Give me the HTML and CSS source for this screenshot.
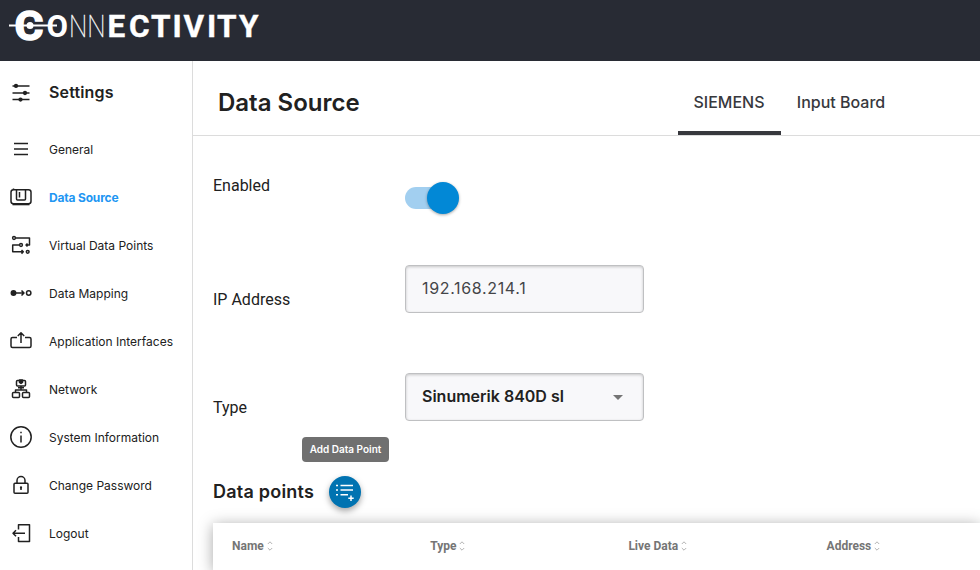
FILE: index.html
```html
<!DOCTYPE html>
<html lang="en">
<head>
<meta charset="utf-8">
<title>Connectivity</title>
<link rel="stylesheet" href="styles.css">
</head>
<body>
<header class="topbar">
  <svg class="logo" width="274" height="61" viewBox="0 0 274 61">
    <g fill="#fff" font-family="Roboto, sans-serif">
      <text x="14.500" y="40" font-size="41" font-weight="700" stroke="#fff" stroke-width="1.400" textLength="29" lengthAdjust="spacingAndGlyphs">C</text>
      <text x="46.500" y="37" font-size="31.500" font-weight="700" textLength="21.500" lengthAdjust="spacingAndGlyphs">O</text>
      <text x="69" y="37" font-size="31.500" font-weight="100" stroke="#fff" stroke-width=".3" textLength="36.500" lengthAdjust="spacingAndGlyphs">NN</text>
      <text x="107.500 129 151 172.500 183.500 207 217 239" y="37" font-size="31.500" font-weight="700" stroke="#fff" stroke-width=".4">ECTIVITY</text>
      <path d="M9 24.500H57v2H9z"/>
      <circle cx="30" cy="25.500" r="3.500"/>
    </g>
  </svg>
</header>
<div class="shell">
  <nav class="sidebar">
    <div class="side-title">
      <svg class="icon" viewBox="0 0 24 24"><path d="M3.500 4.900h17M3.500 12h17M3.500 18.600h17"/><g class="solid"><circle cx="7" cy="4.900" r="1.400"/><circle cx="16" cy="12" r="1.400"/><circle cx="11.500" cy="18.600" r="1.400"/></g></svg>
      <span>Settings</span>
    </div>
    <a class="item"><svg class="icon" viewBox="0 0 24 24"><path d="M5 6.600h14M5 12h14M5 17.400h14"/></svg><span>General</span></a>
    <a class="item active"><svg class="icon" viewBox="0 0 24 24"><rect x="2" y="4.800" width="20" height="14" rx="2.500"/><path d="M3.500 19.300h17" stroke-width="2"/><path d="M7.500 4.800v9.200q0 1 1 1h7q1 0 1-1V4.800M10.500 7v5.500M4.500 3.500v1.500"/></svg><span>Data Source</span></a>
    <a class="item"><svg class="icon" viewBox="0 0 24 24"><circle cx="5" cy="5" r="1.400"/><circle cx="12" cy="12" r="1.400"/><circle cx="18.700" cy="18.800" r="1.400"/><path d="M6.500 5H20.500v7H17M18.500 10.500L17 12l1.500 1.500M10.500 12H3.700v6.800H14M12.500 17l1.800 1.800-1.800 1.800"/></svg><span>Virtual Data Points</span></a>
    <a class="item"><svg class="icon" viewBox="0 0 24 24"><circle class="solid" cx="4.500" cy="12" r="2.200"/><path d="M6 12h9M12.500 9.500L15 12l-2.500 2.500"/><circle cx="19.700" cy="12" r="2.200"/></svg><span>Data Mapping</span></a>
    <a class="item"><svg class="icon" viewBox="0 0 24 24"><path d="M8 8.500H3.500q-1.500 0-1.500 1.500v7q0 1.500 1.500 1.500h17q1.500 0 1.500-1.500v-7q0-1.500-1.500-1.500H16M12 14V3.800M8.800 7L12 3.800 15.200 7"/></svg><span>Application Interfaces</span></a>
    <a class="item"><svg class="icon" viewBox="0 0 24 24"><rect x="7.500" y="3.500" width="9" height="5.500" rx="1"/><path class="solid" d="M10.500 3h3v2.500l-1.500 1-1.500-1z"/><path d="M12 9v4M9 10.800h6M6.500 15.500V13h11v2.500"/><rect x="3.500" y="15.500" width="7" height="5" rx="1"/><rect x="13.500" y="15.500" width="7" height="5" rx="1"/></svg><span>Network</span></a>
    <a class="item"><svg class="icon" viewBox="0 0 24 24"><circle cx="12" cy="12" r="10.200"/><path d="M12 10.500v7M12 6.800v1.500"/></svg><span>System Information</span></a>
    <a class="item"><svg class="icon" viewBox="0 0 24 24"><rect x="5" y="10.300" width="14" height="10" rx="1"/><path d="M8 10.300V7.500a4 4 0 0 1 8 0v2.800M12 14v3"/><circle class="solid" cx="12" cy="14.500" r=".4"/></svg><span>Change Password</span></a>
    <a class="item"><svg class="icon" viewBox="0 0 24 24"><path d="M9.500 8.500V3.800H20.500v16.600H9.500V16M16 12.200H4M7 9.200l-3 3 3 3"/></svg><span>Logout</span></a>
  </nav>
  <main class="main">
    <div class="page-head">
      <h1>Data Source</h1>
      <div class="tabs"><a class="tab selected">SIEMENS</a><a class="tab">Input Board</a></div>
    </div>
    <div class="content">
      <div class="row enabled"><label>Enabled</label><div class="switch"><div class="thumb"></div></div></div>
      <div class="row"><label>IP Address</label><div class="field ip">192.168.214.1</div></div>
      <div class="row"><label>Type</label><div class="field select"><span>Sinumerik 840D sl</span><i class="caret"></i></div></div>
      <div class="points">
        <h2>Data points</h2>
        <div class="add">
          <svg width="32" height="32" viewBox="0 0 32 32"><path d="M11.500 9.500H24M11.500 14H24M11.500 18.700H19M7 9.500h2M7 14h2M7 18.700h2M22 19.500v5.500M19.300 22.200h5.400"/></svg>
          <span class="tooltip">Add Data Point</span>
        </div>
      </div>
      <div class="table">
        <div class="th">Name <svg class="sort" viewBox="0 0 6 10"><path d="M.8 3L3 .8 5.200 3M.8 7L3 9.200 5.200 7"/></svg></div>
        <div class="th">Type <svg class="sort" viewBox="0 0 6 10"><path d="M.8 3L3 .8 5.200 3M.8 7L3 9.200 5.200 7"/></svg></div>
        <div class="th">Live Data <svg class="sort" viewBox="0 0 6 10"><path d="M.8 3L3 .8 5.200 3M.8 7L3 9.200 5.200 7"/></svg></div>
        <div class="th">Address <svg class="sort" viewBox="0 0 6 10"><path d="M.8 3L3 .8 5.200 3M.8 7L3 9.200 5.200 7"/></svg></div>
      </div>
    </div>
  </main>
</div>
</body>
</html>
```
FILE: styles.css
```css
* { box-sizing: border-box; }
html, body { margin: 0; height: 570px; overflow: hidden; }
body { font-family: Inter, sans-serif; color: #212121; background: #fff; }
.topbar { height: 61px; background: #282b34; }
.logo { display: block; }
.shell { display: flex; height: 509px; }
.sidebar { width: 193px; flex: none; border-right: 1px solid #dcdcdc; }
.side-title, .item { display: flex; align-items: center; padding-left: 9px; gap: 16px; }
.side-title { height: 64px; font-size: 16px; font-weight: 600; letter-spacing: .15px; }
.side-title span { padding-bottom: 2px; }
.item { height: 48px; font-size: 12px; }
.item.active span { color: #2196f3; font-weight: 700; letter-spacing: -.18px; }
.icon { width: 24px; height: 24px; flex: none; fill: none; stroke: #212121; stroke-width: 1.500; stroke-linejoin: round; }
.icon .solid { fill: #212121; }
.main { flex: 1; min-width: 0; overflow: hidden; }
.page-head { height: 75px; border-bottom: 1px solid #dcdcdc; display: flex; padding-left: 25px; }
h1 { margin: 0; width: 460px; font-size: 24px; font-weight: 600; line-height: 83px; }
.tabs { display: flex; }
.tab { height: 74px; line-height: 83px; font-size: 16px; font-weight: 500; color: #37383d; width: 103px; text-align: center; }
.tab + .tab { width: 120px; }
.tab.selected { border-bottom: 4px solid #37383d; padding-right: 1px; }
.content { padding-left: 20px; }
.row { display: flex; height: 108px; align-items: center; font-family: Roboto, sans-serif; font-size: 16px; }
.row label { width: 192px; padding-top: 21px; }
.row.enabled { height: 99px; align-items: flex-start; padding-top: 46px; }
.row.enabled label { padding: 0; line-height: 8px; }
.switch { position: relative; width: 54px; height: 32px; padding: 5px 6px 5px 0; }
.switch::before { content: ""; display: block; height: 22px; border-radius: 11px; background: #a2cff0; }
.thumb { position: absolute; right: 0; top: 0; width: 32px; height: 32px; border-radius: 50%; background: #0288d6; box-shadow: 0 1px 3px rgba(0,0,0,.35); }
.field { width: 239px; height: 48px; border: 1px solid #bfc0c2; border-radius: 4px; background: #f8f8fa; box-shadow: inset 0 1px 3px rgba(0,0,0,.2); padding: 0 16px; line-height: 45px; font-family: Inter, sans-serif; }
.ip { color: #444548; letter-spacing: .66px; }
.select { display: flex; justify-content: space-between; align-items: center; font-weight: 600; }
.select span { padding-bottom: 2px; }
.caret { border: 5px solid transparent; border-top-color: #757575; border-bottom: 0; margin-right: 4px; }
.points { display: flex; height: 72px; padding-top: 9px; align-items: center; gap: 15px; }
h2 { margin: 0; width: 101px; font-size: 18px; font-weight: 600; letter-spacing: .22px; white-space: nowrap; }
.add { position: relative; width: 32px; height: 32px; border-radius: 50%; background: #0073b1; box-shadow: 0 3px 6px rgba(0,0,0,.35); }
.add svg { display: block; fill: none; stroke: #fff; stroke-width: 1.500; }
.tooltip { position: absolute; left: -27px; top: -39px; width: 87px; height: 25px; border-radius: 4px; background: #707070; color: #fff; font-size: 10px; font-weight: 600; line-height: 25px; text-align: center; white-space: nowrap; }
.table { display: flex; height: 47px; width: 767px; padding-left: 19px; background: #fff; box-shadow: 0 2px 14px rgba(0,0,0,.35); }
.th { width: 198.200px; flex: none; font: 700 12px/46px Roboto, sans-serif; color: #757575; }
.th:last-child { width: 140px; }
.sort { width: 6px; height: 10px; fill: none; stroke: #aaa; stroke-width: .9; vertical-align: -1px; }
```
